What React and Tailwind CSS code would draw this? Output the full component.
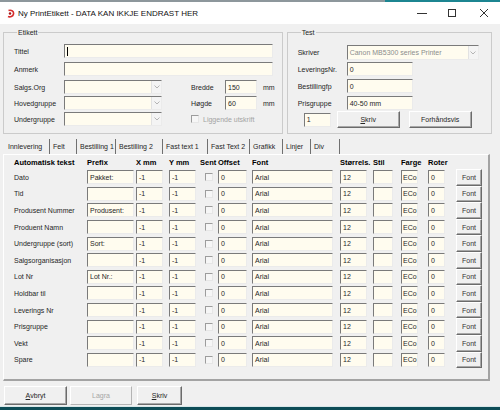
const sunken =
  "border border-t-[#7a7a7a] border-l-[#7a7a7a] border-r-[#ebebeb] border-b-[#ebebeb] bg-[#fffcef]";
const raised =
  "border border-t-white border-l-white border-r-[#6b6b6b] border-b-[#6b6b6b] bg-[#f0f0f0] shadow-[inset_-1px_-1px_0_#a8a8a8]";

const rows = [
  ["Dato", "Pakket:"],
  ["Tid", ""],
  ["Produsent Nummer", "Produsent:"],
  ["Produent Namn", ""],
  ["Undergruppe (sort)", "Sort:"],
  ["Salgsorganisasjon", ""],
  ["Lot Nr", "Lot Nr.:"],
  ["Holdbar til", ""],
  ["Leverings Nr", ""],
  ["Prisgruppe", ""],
  ["Vekt", ""],
  ["Spare", ""],
];

const tabs = [
  ["Innlevering", "w-[45px]"],
  ["Felt", "w-[27px]"],
  ["Bestilling 1", "w-[39px]"],
  ["Bestilling 2", "w-[47px]"],
  ["Fast text 1", "w-[45px]"],
  ["Fast Text 2", "w-[42px]"],
  ["Grafikk", "w-[33px]"],
  ["Linjer", "w-[28px]"],
  ["Div", "w-[29px]"],
];

function Field({ className = "", children }) {
  return (
    <div className={`${sunken} h-[14px] flex items-center pl-[2px] overflow-hidden whitespace-nowrap ${className}`}>
      {children}
    </div>
  );
}

function Select({ className = "", children }) {
  return (
    <div className={`${sunken} flex items-center overflow-hidden ${className}`}>
      <span className="flex-1 pl-[2px] text-[#8c8c8c] whitespace-nowrap">{children}</span>
      <span className="w-[10px] h-full flex items-center justify-center border-l border-[#e2e2e2] bg-[#f4f4f4]">
        <svg width="6" height="4" viewBox="0 0 6 4">
          <path d="M0.5 0.5 L3 3 L5.5 0.5" fill="none" stroke="#b4b4b4" strokeWidth="1" />
        </svg>
      </span>
    </div>
  );
}

function Check() {
  return (
    <div className="w-[8px] h-[8px] border border-t-[#9c9c9c] border-l-[#9c9c9c] border-r-[#e6e6e6] border-b-[#e6e6e6] bg-[#f6f6f6]" />
  );
}

function Button({ className = "", children }) {
  return (
    <button className={`${raised} flex items-center justify-center text-[7px] ${className}`}>{children}</button>
  );
}

function TitleBar() {
  return (
    <div className="h-[22px] bg-white flex items-center pl-[7px]">
      <svg width="8" height="9" viewBox="0 0 8 9" className="mr-[3px]">
        <path d="M1.5 1.5 C4.5 0.5 7 2.5 6.5 5 C6 7.5 3 8.5 1 7.5" fill="none" stroke="#d62b2b" strokeWidth="1.6" />
        <circle cx="3" cy="4.5" r="1.2" fill="#a01818" />
      </svg>
      <span className="text-[8px] text-[#111]">Ny PrintEtikett - DATA KAN IKKJE ENDRAST HER</span>
      <div className="ml-auto flex items-center">
        <svg width="10" height="10" viewBox="0 0 10 10" className="mr-[20px]">
          <path d="M0 5.5 H10" stroke="#333" strokeWidth="1" />
        </svg>
        <svg width="10" height="10" viewBox="0 0 10 10" className="mr-[22px]">
          <rect x="1.5" y="1.5" width="7" height="7" fill="none" stroke="#333" strokeWidth="1" />
        </svg>
        <svg width="10" height="10" viewBox="0 0 10 10" className="mr-[11px]">
          <path d="M1 1 L9 9 M9 1 L1 9" stroke="#333" strokeWidth="1" />
        </svg>
      </div>
    </div>
  );
}

export default function App() {
  return (
    <div className="w-[500px] h-[410px] overflow-hidden bg-[#f0f0f0] flex flex-col text-[7px] leading-[9px] text-[#262626] font-['Liberation_Sans',Arial,sans-serif]">
      <div className="h-[2px] flex">
        <div className="flex-1 bg-[#8d979c]" />
        <div className="w-[115px] bg-[#1c8591]" />
      </div>
      <TitleBar />

      <div className="px-[3px] pt-[3.5px] flex gap-[4px]">
        {/* Etikett */}
        <fieldset className="w-[278px] border border-[#cbcbcb] pl-[10px] pr-[7px] pt-[7.5px] pb-[6px]">
          <legend className="ml-[3px] px-[1px] leading-[9px]">Etikett</legend>
          <div className="flex items-center h-[14px]">
            <span className="w-[50px]">Tittel</span>
            <Field className="w-[209px]">
              <span className="w-px h-[9px] bg-black" />
            </Field>
          </div>
          <div className="flex items-center h-[14px] mt-[4px]">
            <span className="w-[50px]">Anmerk</span>
            <Field className="w-[209px]" />
          </div>
          <div className="flex items-center h-[14px] mt-[4px]">
            <span className="w-[50px]">Salgs.Org</span>
            <Select className="w-[98px] h-[14px]" />
            <span className="ml-[29px] w-[34px]">Bredde</span>
            <Field className="w-[32px]">150</Field>
            <span className="ml-[6px]">mm</span>
          </div>
          <div className="flex items-center h-[14px] mt-[2px]">
            <span className="w-[50px]">Hovedgruppe</span>
            <Select className="w-[98px] h-[14px]" />
            <span className="ml-[29px] w-[34px]">Høgde</span>
            <Field className="w-[32px]">60</Field>
            <span className="ml-[6px]">mm</span>
          </div>
          <div className="flex items-center h-[14px] mt-[2px]">
            <span className="w-[50px]">Undergruppe</span>
            <Select className="w-[98px] h-[14px]" />
            <span className="ml-[29px]">
              <Check />
            </span>
            <span className="ml-[4px] text-[#a3a3a3]">Liggende utskrift</span>
          </div>
        </fieldset>

        {/* Test */}
        <fieldset className="w-[205px] border border-[#cbcbcb] pl-[10px] pt-[8.5px] pb-[5px]">
          <legend className="ml-[3px] px-[1px] leading-[9px]">Test</legend>
          <div className="flex items-center h-[15px]">
            <span className="w-[49px]">Skriver</span>
            <Select className="w-[132px] h-[15px]">Canon MB5300 series Printer</Select>
          </div>
          <div className="flex items-center h-[14px] mt-[2px]">
            <span className="w-[49px]">LeveringsNr.</span>
            <Field className="w-[66px]">0</Field>
          </div>
          <div className="flex items-center h-[14px] mt-[3px]">
            <span className="w-[49px]">Bestillingfp</span>
            <Field className="w-[66px]">0</Field>
          </div>
          <div className="flex items-center h-[14px] mt-[3px]">
            <span className="w-[49px]">Prisgruppe</span>
            <Field className="w-[66px]">40-50 mm</Field>
          </div>
          <div className="flex items-center h-[17px] mt-[1px] pl-[6px]">
            <Field className="w-[27px]">1</Field>
            <Button className="ml-[6px] w-[63px] h-[17px]">
              <span className="underline">S</span>kriv
            </Button>
            <Button className="ml-[9px] w-[63px] h-[17px]">Forhåndsvis</Button>
          </div>
        </fieldset>
      </div>

      {/* tabs */}
      <div className="mt-[5px] h-[15px] pl-[5px] flex">
        {tabs.map(([t, w]) => (
          <div key={t} className={`${w} h-full flex items-center pl-[3px] border-r border-[#707070] whitespace-nowrap`}>
            {t}
          </div>
        ))}
      </div>

      {/* panel */}
      <div className="mx-[3px] w-[487px] h-[227px] border border-t-white border-l-white border-r-2 border-b-2 border-r-[#a3a3a3] border-b-[#a3a3a3] pl-[10px]">
        <div className="flex items-center h-[13px] mt-px font-bold text-[7.5px] text-black">
          <span className="w-[73px]">Automatisk tekst</span>
          <span className="w-[49px]">Prefix</span>
          <span className="w-[33px]">X mm</span>
          <span className="w-[31px]">Y mm</span>
          <span className="w-[18px]">Sent</span>
          <span className="w-[34px]">Offset</span>
          <span className="w-[88px]">Font</span>
          <span className="w-[33px]">Størrels.</span>
          <span className="w-[28px]">Stil</span>
          <span className="w-[27px]">Farge</span>
          <span className="w-[28px]">Roter</span>
        </div>
        {rows.map(([label, prefix]) => (
          <div key={label} className="flex items-center h-[16.6px]">
            <span className="w-[73px] whitespace-nowrap">{label}</span>
            <div className="w-[49px]">
              <Field className="w-[47px]">{prefix}</Field>
            </div>
            <div className="w-[33px]">
              <Field className="w-[27px]">-1</Field>
            </div>
            <div className="w-[31px]">
              <Field className="w-[27px]">-1</Field>
            </div>
            <div className="w-[18px] pl-[5px]">
              <Check />
            </div>
            <div className="w-[34px]">
              <Field className="w-[29px]">0</Field>
            </div>
            <div className="w-[88px]">
              <Field className="w-[81px]">Arial</Field>
            </div>
            <div className="w-[33px]">
              <Field className="w-[27px]">12</Field>
            </div>
            <div className="w-[28px]">
              <Field className="w-[20px]" />
            </div>
            <div className="w-[27px]">
              <Field className="w-[17px] pl-px">ECo</Field>
            </div>
            <div className="w-[28px]">
              <Field className="w-[17px]">0</Field>
            </div>
            <Button className="w-[26px] h-full text-[#333]">Font</Button>
          </div>
        ))}
      </div>

      {/* bottom buttons */}
      <div className="mt-[5px] pl-[4px] flex h-[19px]">
        <Button className="w-[63px] h-full">
          <span className="underline">A</span>vbryt
        </Button>
        <Button className="ml-[3px] w-[62px] h-full text-[#a6a6a6] border-r-[#b4b4b4] border-b-[#b4b4b4] shadow-none">
          Lagra
        </Button>
        <Button className="ml-[5px] w-[45px] h-full">
          <span className="underline">S</span>kriv
        </Button>
      </div>

      <div className="flex-1" />
      <div className="h-px bg-[#d8e6e8]" />
      <div className="h-[3px] bg-[#0d4c56]" />
    </div>
  );
}
